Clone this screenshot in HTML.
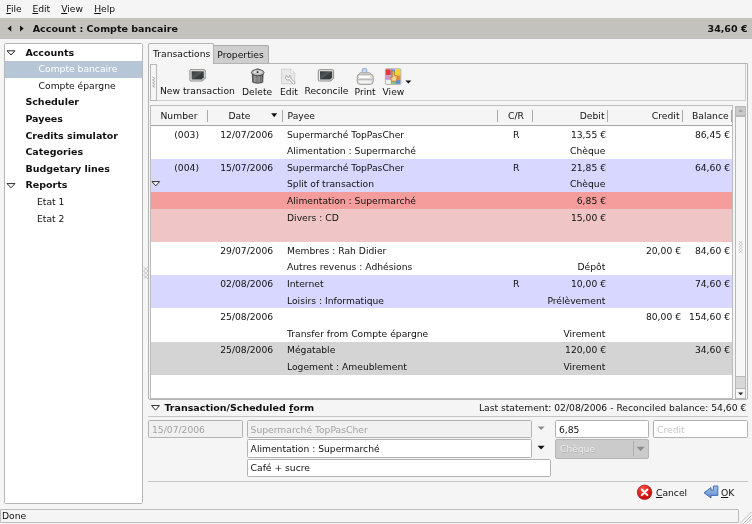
<!DOCTYPE html>
<html><head><meta charset="utf-8"><title>Grisbi</title>
<style>
html,body{margin:0;padding:0}
body{width:752px;height:524px;overflow:hidden;background:#f5f5f5;font-family:"DejaVu Sans","Liberation Sans",sans-serif;font-size:9.2px;color:#111;position:relative}
#wrap{position:absolute;left:-12px;top:-12px;width:776px;height:548px;will-change:transform;overflow:hidden;filter:blur(0.38px);background:#f5f5f5}
#in{position:absolute;left:12px;top:12px;width:752px;height:524px}
.a{position:absolute;white-space:nowrap;box-sizing:border-box}
.t{position:absolute;white-space:nowrap;line-height:12px;height:12px}
.b{font-weight:bold;font-size:9.5px}
u{text-decoration:underline;text-decoration-thickness:1px;text-underline-offset:1px}
.sep{position:absolute;width:1px;background:#a8a8a8;top:110px;height:12.4px}
.entry{position:absolute;box-sizing:border-box;border:1px solid #b2b2b2;background:#fff;height:18.4px;border-radius:1.5px}
.dis{background:#f1f1f1}
</style></head><body><div id="wrap"><div id="in">
<div class="t" style="left:6.3px;top:3px"><u>F</u>ile</div>
<div class="t" style="left:32.4px;top:3px"><u>E</u>dit</div>
<div class="t" style="left:61.2px;top:3px"><u>V</u>iew</div>
<div class="t" style="left:94.2px;top:3px"><u>H</u>elp</div>
<div class="a" style="left:-12px;top:18.2px;width:776px;height:20.4px;background:#c4c2bd"></div>
<svg class="a" style="left:0;top:18px" width="30" height="21"><path d="M11.3 7.4 L11.3 13.4 L7.6 10.4 Z M20 7.4 L20 13.4 L23.7 10.4 Z" fill="#111"/></svg>
<div class="t b" style="left:32.7px;top:22.6px;font-size:9.55px">Account : Compte bancaire</div>
<div class="t b" style="right:4.5px;top:22.6px">34,60 €</div>
<div class="a" style="left:4.4px;top:43.4px;width:138.8px;height:460.6px;background:#fff;border:1px solid #b6b6b6;border-radius:1.5px"></div>
<div class="a" style="left:5.4px;top:61.2px;width:136.8px;height:16.6px;background:#b6c6d6"></div>
<svg class="a" style="left:5px;top:44.6px" width="14" height="160"><path d="M2 5.8 L10 5.8 L6 10 Z M2 138.6 L10 138.6 L6 142.8 Z" fill="#fff" stroke="#2a2a2a" stroke-width="1"/></svg>
<div class="t b" style="left:25.4px;top:46.5px">Accounts</div>
<div class="t" style="left:38.6px;top:63.1px;color:#fff">Compte bancaire</div>
<div class="t" style="left:38.6px;top:79.7px">Compte épargne</div>
<div class="t b" style="left:25.4px;top:96.3px">Scheduler</div>
<div class="t b" style="left:25.4px;top:112.9px">Payees</div>
<div class="t b" style="left:25.4px;top:129.5px">Credits simulator</div>
<div class="t b" style="left:25.4px;top:146.1px">Categories</div>
<div class="t b" style="left:25.4px;top:162.7px">Budgetary lines</div>
<div class="t b" style="left:25.4px;top:179.3px">Reports</div>
<div class="t" style="left:37px;top:195.9px">Etat 1</div>
<div class="t" style="left:37px;top:212.5px">Etat 2</div>
<svg class="a" style="left:143px;top:266px" width="6" height="15"><path d="M0.5 1 L5 5 M5 1 L0.5 5 M0.5 5 L5 9 M5 5 L0.5 9 M0.5 9 L5 13 M5 9 L0.5 13" stroke="#bdbdbd" stroke-width="0.8" fill="none"/></svg>
<div class="a" style="left:148.3px;top:63px;width:599.8px;height:337.3px;border:1px solid #b4b4b4;border-radius:0 0 2px 2px"></div>
<div class="a" style="left:148.3px;top:43.3px;width:65.8px;height:21px;background:#f5f5f5;border:1px solid #b4b4b4;border-bottom:none;border-radius:2px 2px 0 0"></div>
<div class="a" style="left:213.6px;top:44.8px;width:55.4px;height:18.4px;background:#cecece;border:1px solid #a8a8a8;border-bottom:none;border-left:none;border-radius:0 2px 0 0"></div>
<div class="t" style="left:153px;top:47.6px">Transactions</div>
<div class="t" style="left:217.3px;top:48.6px">Properties</div>
<div class="a" style="left:150px;top:64.2px;width:595.8px;height:37px;border:1px solid #cfcfcf;border-top:none"></div>
<div class="a" style="left:150.3px;top:64.2px;width:6.6px;height:36.4px;border:1px solid #b8b8b8;background:#f5f5f5"></div>
<svg class="a" style="left:151px;top:76px" width="6" height="14"><path d="M1.5 1 L4 2.5 L1.5 4 L4 5.5 L1.5 7 L4 8.5 L1.5 10 L4 11.5" stroke="#ababab" stroke-width="0.9" fill="none"/></svg>
<div class="t" style="left:160px;top:85px">New transaction</div>
<div class="t" style="left:242px;top:85.6px">Delete</div>
<div class="t" style="left:280px;top:85.6px">Edit</div>
<div class="t" style="left:304.5px;top:84.6px">Reconcile</div>
<div class="t" style="left:354.5px;top:85.6px">Print</div>
<div class="t" style="left:382.5px;top:85.6px">View</div>
<svg class="a" style="left:0;top:0" width="752" height="104">
<defs>
<linearGradient id="scr" x1="0" y1="0" x2="1" y2="1"><stop offset="0" stop-color="#2e3436"/><stop offset="0.45" stop-color="#555a58"/><stop offset="0.55" stop-color="#3a3f3e"/><stop offset="1" stop-color="#2e3436"/></linearGradient>
<linearGradient id="can" x1="0" y1="0" x2="1" y2="0"><stop offset="0" stop-color="#555"/><stop offset="0.25" stop-color="#9a9a9a"/><stop offset="0.4" stop-color="#666"/><stop offset="0.6" stop-color="#8a8a8a"/><stop offset="0.8" stop-color="#5a5a5a"/><stop offset="1" stop-color="#444"/></linearGradient>
</defs>
<g transform="translate(189.4,69.2)">
<path d="M1.5 0.5 H14.8 Q15.8 0.5 15.8 1.5 V9 L13 11.8 H1.5 Q0.5 11.8 0.5 10.8 V1.5 Q0.5 0.5 1.5 0.5 Z" fill="#e9e9e7" stroke="#8b8d88" stroke-width="1"/>
<path d="M2.2 2 H14.4 V8.6 L12.6 10.4 H2.2 Z" fill="url(#scr)"/>
<path d="M15.6 9 L13 11.6 L13 9.6 Q13 9 13.6 9 Z" fill="#d8d8d4" stroke="#8b8d88" stroke-width="0.5"/>
</g>
<g transform="translate(317.8,69.2)">
<path d="M1.5 0.5 H14.8 Q15.8 0.5 15.8 1.5 V9 L13 11.8 H1.5 Q0.5 11.8 0.5 10.8 V1.5 Q0.5 0.5 1.5 0.5 Z" fill="#e9e9e7" stroke="#8b8d88" stroke-width="1"/>
<path d="M2.2 2 H14.4 V8.6 L12.6 10.4 H2.2 Z" fill="url(#scr)"/>
<path d="M15.6 9 L13 11.6 L13 9.6 Q13 9 13.6 9 Z" fill="#d8d8d4" stroke="#8b8d88" stroke-width="0.5"/>
</g>
<g transform="translate(251,68.6)">
<ellipse cx="6.7" cy="13.6" rx="6.2" ry="1.8" fill="#b8b8b8" opacity="0.7"/>
<path d="M1.3 5.4 L1.7 13.4 Q6.7 15.8 11.7 13.4 L12.1 5.4 Z" fill="url(#can)" stroke="#444" stroke-width="0.8"/>
<path d="M3.6 7.4 V13.6 M6 7.8 V14 M8.4 7.8 V14 M10.4 7.4 V13.4" stroke="#a8a8a8" stroke-width="0.8" opacity="0.8"/>
<ellipse cx="6.7" cy="4" rx="6.3" ry="3.1" fill="#b9b9b9" stroke="#4c4c4c" stroke-width="1"/>
<ellipse cx="6.7" cy="3.3" rx="4.2" ry="1.7" fill="#dedede"/>
<ellipse cx="6.6" cy="3.5" rx="1.1" ry="0.9" fill="#222"/>
<path d="M4.4 1 Q6.7 -0.6 9 1" fill="none" stroke="#666" stroke-width="1"/>
</g>
<g transform="translate(281,68.6)">
<path d="M0.6 0.6 H9.8 L13.8 4.6 V15.2 H0.6 Z" fill="#e9e9e9" stroke="#cdcdcd" stroke-width="0.9"/>
<path d="M9.8 0.6 V4.6 H13.8 Z" fill="#fbfbfb" stroke="#cdcdcd" stroke-width="0.7"/>
<path d="M5.6 6.6 Q3.6 8.6 5 10.6 Q6.4 12 8.2 11.2 L12.6 15.6 L14.2 14 L9.8 9.8 Q10.6 8 9 6.6 L8.2 8.6 L6.6 8.6 Z" fill="#f8f8f8" stroke="#a4a4a4" stroke-width="0.9" stroke-linejoin="round"/>
</g>
<g transform="translate(356.8,68.6)">
<rect x="5.3" y="-0.2" width="4.8" height="5" rx="1.2" fill="#a9c3e8" stroke="#8aaad8" stroke-width="0.7"/>
<rect x="6.8" y="1" width="1.8" height="3" fill="#dfe9f6"/>
<path d="M3.4 3.9 H13 L14.6 6.4 H1.8 Z" fill="#f0f0ee" stroke="#a8a8a4" stroke-width="0.8"/>
<rect x="0.4" y="5.4" width="16" height="10.4" rx="3" fill="#d9d9d6" stroke="#9a9a96" stroke-width="0.9"/>
<rect x="2.2" y="7.2" width="12.4" height="2.2" rx="0.6" fill="#fbfbfa"/>
<rect x="1.4" y="10.6" width="14" height="0.8" fill="#b4b4b0"/>
<rect x="2.4" y="12.2" width="12" height="2.4" rx="0.8" fill="#f3f3f1"/>
<rect x="13.4" y="7.4" width="1" height="1.6" fill="#efe27a"/>
</g>
<g transform="translate(385,68.4)">
<rect x="0.4" y="0.4" width="15.4" height="15.6" rx="1" fill="#f4f4f4" stroke="#9a9a9a" stroke-width="0.8"/>
<rect x="0.9" y="0.9" width="4.9" height="6" fill="#e23a3a"/>
<rect x="5.8" y="0.9" width="4.4" height="6" fill="#6a9ad8"/>
<rect x="10.2" y="0.9" width="5.1" height="6" fill="#f2d42a"/>
<rect x="0.9" y="6.9" width="4.9" height="4.6" fill="#c29ad0"/>
<rect x="10.4" y="6.9" width="4.9" height="4.6" fill="#f08a2a"/><rect x="5.8" y="6.9" width="4.6" height="4.6" fill="#8ab0e0"/>
<rect x="0.9" y="11.5" width="4.9" height="4" fill="#efefef"/>
<rect x="5.8" y="11.5" width="4.6" height="4" fill="#7ad04a"/><rect x="7" y="11.5" width="3.4" height="2.8" fill="#9cc0ea"/>
<rect x="10.4" y="11.5" width="4.9" height="4" fill="#5a90d8"/>
<path d="M7.2 3.6 Q7.2 2.5 8.3 2.5 Q9.4 2.5 9.4 3.6 V6.8 L11.4 7.2 Q12.5 7.6 12.3 9 L11.9 11.6 Q11.5 13.3 10 13.3 H8 Q6.6 13.3 6.2 11.8 L5.5 9.4 Q5.6 8.1 7.2 8.9 Z" fill="#efbf78" stroke="#b27a26" stroke-width="0.8"/><ellipse cx="9" cy="10.2" rx="1.8" ry="1.6" fill="#f8dcaa" opacity="0.8"/>
</g>
<path d="M405.4 80.4 H411.4 L408.4 83.6 Z" fill="#111"/>
</svg>

<div class="a" style="left:149.5px;top:105.4px;width:583.8px;height:293.6px;background:#fff;border:1px solid #bcbcbc"></div>
<div class="a" style="left:150.5px;top:106.4px;width:581.8px;height:19.4px;background:#f5f5f5;border-bottom:1px solid #a6a6a6"></div>
<div class="a" style="left:150.5px;top:159.1px;width:581.8px;height:33.2px;background:#d7d7ff"></div>
<div class="a" style="left:150.5px;top:192.3px;width:581.8px;height:16.6px;background:#f59d9d"></div>
<div class="a" style="left:150.5px;top:208.9px;width:581.8px;height:33.2px;background:#efc5c5"></div>
<div class="a" style="left:150.5px;top:275.3px;width:581.8px;height:33.2px;background:#d7d7ff"></div>
<div class="a" style="left:150.5px;top:341.7px;width:581.8px;height:33.2px;background:#d4d4d4"></div>
<div class="t" style="left:160.5px;top:109.9px">Number</div>
<div class="t" style="left:228.5px;top:109.9px">Date</div>
<div class="t" style="left:287.5px;top:109.9px">Payee</div>
<div class="t" style="left:508px;top:109.9px">C/R</div>
<div class="t" style="right:147.5px;top:109.9px">Debit</div>
<div class="t" style="right:72.5px;top:109.9px">Credit</div>
<div class="t" style="right:23.4px;top:109.9px">Balance</div>
<div class="sep" style="left:207px"></div>
<div class="sep" style="left:282px"></div>
<div class="sep" style="left:497px"></div>
<div class="sep" style="left:532px"></div>
<div class="sep" style="left:607px"></div>
<div class="sep" style="left:682px"></div>
<div class="sep" style="left:731px"></div>
<svg class="a" style="left:270px;top:112px" width="10" height="8"><path d="M1.2 1.3 L7.2 1.3 L4.2 5.2 Z" fill="#111"/></svg>
<svg class="a" style="left:150px;top:175.7px" width="12" height="16"><path d="M2 5.6 L9.6 5.6 L5.8 9.8 Z" fill="#fff" stroke="#2a2a2a" stroke-width="1"/></svg>
<div class="t" style="right:553px;top:128.65px">(003)</div>
<div class="t" style="left:220.2px;top:128.65px">12/07/2006</div>
<div class="t" style="left:287px;top:128.65px">Supermarché TopPasCher</div>
<div class="t" style="left:513px;top:128.65px">R</div>
<div class="t" style="right:146px;top:128.65px">13,55 €</div>
<div class="t" style="right:22px;top:128.65px">86,45 €</div>
<div class="t" style="left:287px;top:145.25px">Alimentation : Supermarché</div>
<div class="t" style="right:146.7px;top:145.25px">Chèque</div>
<div class="t" style="right:553px;top:161.85px">(004)</div>
<div class="t" style="left:220.2px;top:161.85px">15/07/2006</div>
<div class="t" style="left:287px;top:161.85px">Supermarché TopPasCher</div>
<div class="t" style="left:513px;top:161.85px">R</div>
<div class="t" style="right:146px;top:161.85px">21,85 €</div>
<div class="t" style="right:22px;top:161.85px">64,60 €</div>
<div class="t" style="left:287px;top:178.45px">Split of transaction</div>
<div class="t" style="right:146.7px;top:178.45px">Chèque</div>
<div class="t" style="left:287px;top:195.05px">Alimentation : Supermarché</div>
<div class="t" style="right:146px;top:195.05px">6,85 €</div>
<div class="t" style="left:287px;top:211.65px">Divers : CD</div>
<div class="t" style="right:146px;top:211.65px">15,00 €</div>
<div class="t" style="left:220.2px;top:244.85px">29/07/2006</div>
<div class="t" style="left:287px;top:244.85px">Membres : Rah Didier</div>
<div class="t" style="right:71px;top:244.85px">20,00 €</div>
<div class="t" style="right:22px;top:244.85px">84,60 €</div>
<div class="t" style="left:287px;top:261.45px">Autres revenus : Adhésions</div>
<div class="t" style="right:146.7px;top:261.45px">Dépôt</div>
<div class="t" style="left:220.2px;top:278.05px">02/08/2006</div>
<div class="t" style="left:287px;top:278.05px">Internet</div>
<div class="t" style="left:513px;top:278.05px">R</div>
<div class="t" style="right:146px;top:278.05px">10,00 €</div>
<div class="t" style="right:22px;top:278.05px">74,60 €</div>
<div class="t" style="left:287px;top:294.65px">Loisirs : Informatique</div>
<div class="t" style="right:146.7px;top:294.65px">Prélèvement</div>
<div class="t" style="left:220.2px;top:311.25px">25/08/2006</div>
<div class="t" style="right:71px;top:311.25px">80,00 €</div>
<div class="t" style="right:22px;top:311.25px">154,60 €</div>
<div class="t" style="left:287px;top:327.85px">Transfer from Compte épargne</div>
<div class="t" style="right:146.7px;top:327.85px">Virement</div>
<div class="t" style="left:220.2px;top:344.45px">25/08/2006</div>
<div class="t" style="left:287px;top:344.45px">Mégatable</div>
<div class="t" style="right:146px;top:344.45px">120,00 €</div>
<div class="t" style="right:22px;top:344.45px">34,60 €</div>
<div class="t" style="left:287px;top:361.05px">Logement : Ameublement</div>
<div class="t" style="right:146.7px;top:361.05px">Virement</div>
<div class="a" style="left:735px;top:105.6px;width:11.2px;height:293.2px;background:#d8d8d8;border:1px solid #b8b8b8;border-radius:1px"></div>
<div class="a" style="left:735px;top:105.6px;width:11.2px;height:10.8px;background:#cacaca;border:1px solid #b8b8b8"></div>
<div class="a" style="left:735px;top:116px;width:11.2px;height:261.4px;background:#f6f6f6;border:1px solid #b8b8b8"></div>
<div class="a" style="left:735px;top:388.2px;width:11.2px;height:10.6px;background:#f6f6f6;border:1px solid #b8b8b8"></div>
<svg class="a" style="left:735px;top:105px" width="12" height="295"><path d="M3.4 6.8 L8 6.8 L5.7 4.2 Z" fill="#9a9a9a"/><path d="M3.2 287.4 L8.2 287.4 L5.7 290.2 Z" fill="#222"/><path d="M3.8 136 L7.6 139 M7.6 136 L3.8 139 M3.8 139 L7.6 142 M7.6 139 L3.8 142 M3.8 142 L7.6 145 M7.6 142 L3.8 145 M3.8 145 L7.6 148 M7.6 145 L3.8 148" stroke="#c2c2c2" stroke-width="0.7" fill="none"/></svg>
<svg class="a" style="left:149px;top:402px" width="14" height="12"><path d="M2.6 3.6 L10.4 3.6 L6.5 8.2 Z" fill="#fff" stroke="#2a2a2a" stroke-width="1"/></svg>
<div class="t b" style="left:164.4px;top:402.2px">Transaction/Scheduled <u>f</u>orm</div>
<div class="t" style="right:5.7px;top:402.3px">Last statement: 02/08/2006 - Reconciled balance: 54,60 €</div>
<div class="a" style="left:148.3px;top:415.6px;width:599.6px;height:1px;background:#c6c6c6"></div>
<div class="entry dis" style="left:148.2px;top:420px;width:94.6px"></div>
<div class="t" style="left:152px;top:423.6px;color:#a2a2a2">15/07/2006</div>
<div class="entry dis" style="left:247px;top:420px;width:285px"></div>
<div class="t" style="left:250.6px;top:423.6px;color:#a2a2a2">Supermarché TopPasCher</div>
<div class="entry" style="left:555px;top:420px;width:93.8px"></div>
<div class="t" style="left:559px;top:423.6px">6,85</div>
<div class="entry" style="left:653.2px;top:420px;width:94.8px"></div>
<div class="t" style="left:657px;top:423.6px;color:#c6c6c6">Credit</div>
<div class="entry" style="left:247px;top:439.2px;width:285px"></div>
<div class="t" style="left:250.6px;top:442.9px">Alimentation : Supermarché</div>
<div class="entry" style="left:247px;top:458.6px;width:304px"></div>
<div class="t" style="left:250.6px;top:462.2px">Café + sucre</div>
<svg class="a" style="left:536px;top:420px" width="14" height="40"><path d="M1.6 6.5 L8.6 6.5 L5.1 10 Z" fill="#8e8e8e"/><path d="M1.6 25.7 L8.6 25.7 L5.1 29.4 Z" fill="#111"/></svg>
<div class="a" style="left:555px;top:438.8px;width:93.8px;height:19.8px;background:#cbcbcb;border:1px solid #b4b4b4;border-radius:2px"></div>
<div class="a" style="left:633.4px;top:441px;width:1px;height:15.4px;background:#adadad"></div>
<div class="t" style="left:560px;top:443px;color:#ececec;text-shadow:0.6px 0.6px 0 #b2b2b2">Chèque</div>
<svg class="a" style="left:634px;top:440px" width="14" height="16"><path d="M2.6 6.8 L10.6 6.8 L6.6 11 Z" fill="#8a8a8a"/></svg>
<div class="a" style="left:148.3px;top:480.6px;width:599.6px;height:1px;background:#c6c6c6"></div>
<svg class="a" style="left:630px;top:482px" width="100" height="24">
<defs><radialGradient id="rg" cx="0.4" cy="0.3" r="0.8"><stop offset="0" stop-color="#f25a4a"/><stop offset="0.6" stop-color="#d81818"/><stop offset="1" stop-color="#a80808"/></radialGradient>
<linearGradient id="bg" x1="0" y1="0" x2="0" y2="1"><stop offset="0" stop-color="#a8c4ea"/><stop offset="1" stop-color="#5a8ad0"/></linearGradient></defs>
<circle cx="14.6" cy="10.3" r="7.3" fill="url(#rg)" stroke="#a01010" stroke-width="0.6"/>
<path d="M11.8 7.5 L17.4 13.1 M17.4 7.5 L11.8 13.1" stroke="#fff" stroke-width="2" stroke-linecap="round"/>
<path d="M83.4 4 H87.8 V13.4 H81 V16 L74 10.8 L81 5.6 V8.2 H83.4 Z" fill="url(#bg)" stroke="#3a62a6" stroke-width="0.9" stroke-linejoin="round"/>
</svg>

<div class="t" style="left:656px;top:487px"><u>C</u>ancel</div>
<div class="t" style="left:721px;top:487px"><u>O</u>K</div>
<div class="a" style="left:0.3px;top:509px;width:738.6px;height:14.4px;border:1px solid #bdbdbd;border-radius:1px"></div>
<div class="t" style="left:2px;top:510.4px">Done</div>
<svg class="a" style="left:738px;top:510px" width="14" height="14"><path d="M13.5 2 L2 13.5 M13.5 5.5 L5.5 13.5 M13.5 9 L9 13.5" stroke="#b0b0b0" stroke-width="1" fill="none"/><path d="M13.5 3 L3 13.5 M13.5 6.5 L6.5 13.5 M13.5 10 L10 13.5" stroke="#fff" stroke-width="0.8" fill="none"/></svg>
</div></div></body></html>
